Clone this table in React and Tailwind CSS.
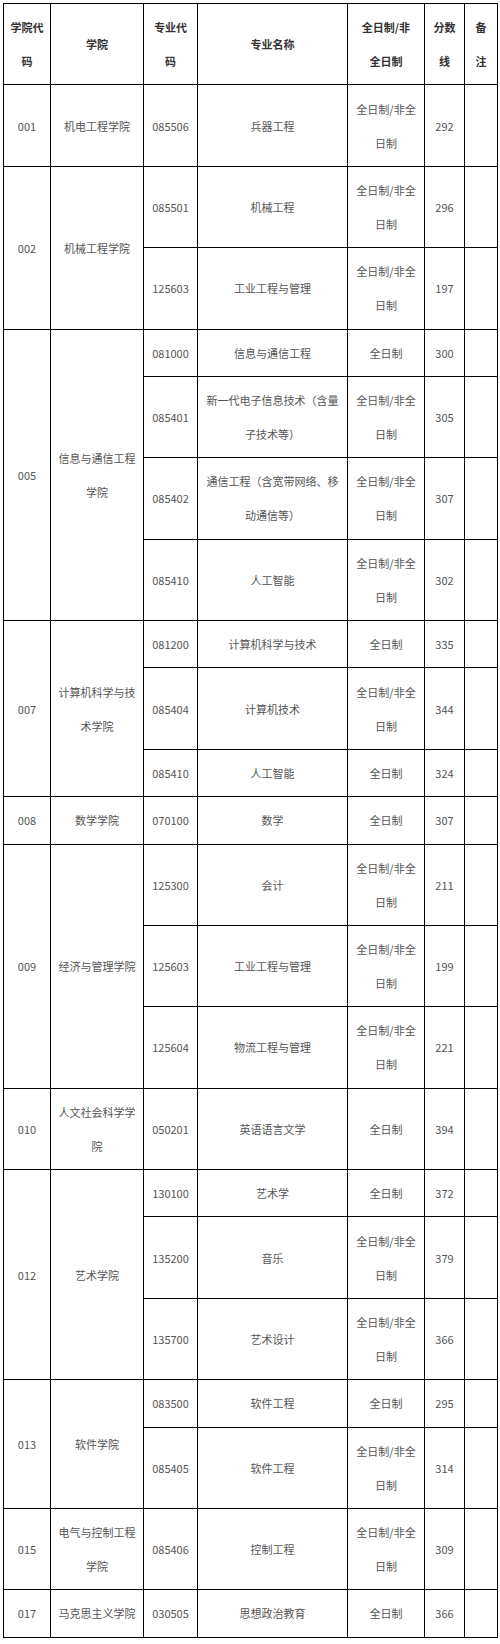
import React from 'react';

const FP = ['全日制/非全', '日制'];
const FT = ['全日制'];

const colleges = [
  { code: '001', name: ['机电工程学院'], majors: [
    { code: '085506', name: ['兵器工程'], type: FP, score: '292' },
  ] },
  { code: '002', name: ['机械工程学院'], majors: [
    { code: '085501', name: ['机械工程'], type: FP, score: '296' },
    { code: '125603', name: ['工业工程与管理'], type: FP, score: '197' },
  ] },
  { code: '005', name: ['信息与通信工程', '学院'], majors: [
    { code: '081000', name: ['信息与通信工程'], type: FT, score: '300' },
    { code: '085401', name: ['新一代电子信息技术（含量', '子技术等）'], type: FP, score: '305' },
    { code: '085402', name: ['通信工程（含宽带网络、移', '动通信等）'], type: FP, score: '307' },
    { code: '085410', name: ['人工智能'], type: FP, score: '302' },
  ] },
  { code: '007', name: ['计算机科学与技', '术学院'], majors: [
    { code: '081200', name: ['计算机科学与技术'], type: FT, score: '335' },
    { code: '085404', name: ['计算机技术'], type: FP, score: '344' },
    { code: '085410', name: ['人工智能'], type: FT, score: '324' },
  ] },
  { code: '008', name: ['数学学院'], majors: [
    { code: '070100', name: ['数学'], type: FT, score: '307' },
  ] },
  { code: '009', name: ['经济与管理学院'], majors: [
    { code: '125300', name: ['会计'], type: FP, score: '211' },
    { code: '125603', name: ['工业工程与管理'], type: FP, score: '199' },
    { code: '125604', name: ['物流工程与管理'], type: FP, score: '221' },
  ] },
  { code: '010', name: ['人文社会科学学', '院'], majors: [
    { code: '050201', name: ['英语语言文学'], type: FT, score: '394' },
  ] },
  { code: '012', name: ['艺术学院'], majors: [
    { code: '130100', name: ['艺术学'], type: FT, score: '372' },
    { code: '135200', name: ['音乐'], type: FP, score: '379' },
    { code: '135700', name: ['艺术设计'], type: FP, score: '366' },
  ] },
  { code: '013', name: ['软件学院'], majors: [
    { code: '083500', name: ['软件工程'], type: FT, score: '295' },
    { code: '085405', name: ['软件工程'], type: FP, score: '314' },
  ] },
  { code: '015', name: ['电气与控制工程', '学院'], majors: [
    { code: '085406', name: ['控制工程'], type: FP, score: '309' },
  ] },
  { code: '017', name: ['马克思主义学院'], majors: [
    { code: '030505', name: ['思想政治教育'], type: FT, score: '366' },
  ] },
];

const cell = 'border border-black px-[4px] py-[6.2px] text-center align-middle leading-[34px] whitespace-nowrap';

const Lines = ({ lines }) =>
  lines.map((l, i) => (
    <React.Fragment key={i}>
      {i > 0 && <br />}
      {l}
    </React.Fragment>
  ));

export default function App() {
  return (
    <div className="bg-white min-h-[1644px] pl-[3px] pt-[3px] font-['Noto_Sans_CJK_SC','Microsoft_YaHei',sans-serif] text-[11px] text-[#555]">
      <table className="border-collapse table-fixed w-[494px]">
        <colgroup>
          <col className="w-[47px]" />
          <col className="w-[93px]" />
          <col className="w-[54px]" />
          <col className="w-[150px]" />
          <col className="w-[77px]" />
          <col className="w-[40px]" />
          <col className="w-[33px]" />
        </colgroup>
        <thead>
          <tr className="font-bold text-[#333]">
            <th className={cell}><Lines lines={['学院代', '码']} /></th>
            <th className={cell}>学院</th>
            <th className={cell}><Lines lines={['专业代', '码']} /></th>
            <th className={cell}>专业名称</th>
            <th className={cell}><Lines lines={['全日制/非', '全日制']} /></th>
            <th className={cell}><Lines lines={['分数', '线']} /></th>
            <th className={cell}><Lines lines={['备', '注']} /></th>
          </tr>
        </thead>
        <tbody>
          {colleges.map((c) =>
            c.majors.map((m, i) => (
              <tr key={c.code + m.code + i}>
                {i === 0 && (
                  <>
                    <td rowSpan={c.majors.length} className={cell}>{c.code}</td>
                    <td rowSpan={c.majors.length} className={cell}><Lines lines={c.name} /></td>
                  </>
                )}
                <td className={cell}>{m.code}</td>
                <td className={cell}><Lines lines={m.name} /></td>
                <td className={cell}><Lines lines={m.type} /></td>
                <td className={cell}>{m.score}</td>
                <td className={cell}></td>
              </tr>
            ))
          )}
        </tbody>
      </table>
    </div>
  );
}
